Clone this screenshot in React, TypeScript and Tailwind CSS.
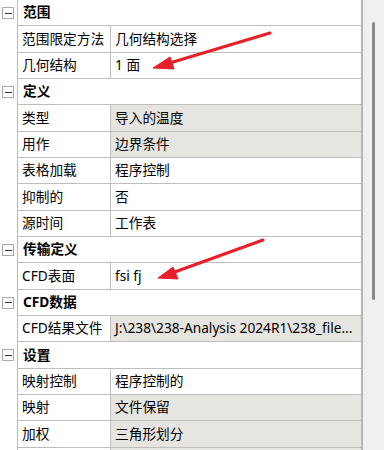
import React from 'react';

type Row =
  | { kind: 'group'; title: string }
  | { kind: 'prop'; name: string; value: string; readOnly?: boolean };

const rows: Row[] = [
  { kind: 'group', title: '范围' },
  { kind: 'prop', name: '范围限定方法', value: '几何结构选择' },
  { kind: 'prop', name: '几何结构', value: '1 面' },
  { kind: 'group', title: '定义' },
  { kind: 'prop', name: '类型', value: '导入的温度', readOnly: true },
  { kind: 'prop', name: '用作', value: '边界条件', readOnly: true },
  { kind: 'prop', name: '表格加载', value: '程序控制' },
  { kind: 'prop', name: '抑制的', value: '否' },
  { kind: 'prop', name: '源时间', value: '工作表' },
  { kind: 'group', title: '传输定义' },
  { kind: 'prop', name: 'CFD表面', value: 'fsi fj' },
  { kind: 'group', title: 'CFD数据' },
  { kind: 'prop', name: 'CFD结果文件', value: 'J:\\238\\238-Analysis 2024R1\\238_file...', readOnly: true },
  { kind: 'group', title: '设置' },
  { kind: 'prop', name: '映射控制', value: '程序控制的' },
  { kind: 'prop', name: '映射', value: '文件保留', readOnly: true },
  { kind: 'prop', name: '加权', value: '三角形划分', readOnly: true },
  { kind: 'prop', name: '', value: '', readOnly: true },
];

function MinusBox() {
  return (
    <div className="flex h-[12px] w-[12px] items-center justify-center border border-[#a6a6a6] bg-white">
      <div className="h-[1px] w-[7px] bg-[#333]" />
    </div>
  );
}

export default function App() {
  return (
    <div
      className="relative flex h-[450px] w-[384px] overflow-hidden bg-white text-[13.7px] text-black"
      style={{ fontFamily: '"Noto Sans", "Noto Sans CJK SC", sans-serif' }}
    >
      <div className="flex w-[363px] shrink-0 flex-col border-r-2 border-[#b5b5b5]">
        {rows.map((row, i) => (
          <div key={i} className="flex h-[26.33px] shrink-0">
            <div className="flex w-[18px] shrink-0 items-center justify-center border-r border-[#b9b9b9] pl-[1px] pr-[2px]">
              {row.kind === 'group' && <MinusBox />}
            </div>
            {row.kind === 'group' ? (
              <div className="flex flex-1 items-center border-b border-[#bdbdbd] pl-[5px] font-bold">
                {row.title}
              </div>
            ) : (
              <div className="flex flex-1 border-b border-[#bdbdbd]">
                <div className="flex w-[93px] shrink-0 items-center whitespace-nowrap border-r border-[#bdbdbd] pl-[4px]">
                  {row.name}
                </div>
                <div
                  className={
                    'flex flex-1 items-center overflow-hidden whitespace-nowrap pl-[4px] ' +
                    (row.readOnly ? 'bg-[#e7e5e1]' : 'bg-white')
                  }
                >
                  {row.value}
                </div>
              </div>
            )}
          </div>
        ))}
      </div>

      <div className="flex flex-1 justify-center bg-[#f0f0f0] pt-[22px]">
        <div className="h-[278px] w-[3px] rounded-full bg-[#8a8a8a]" />
      </div>

      <svg className="pointer-events-none absolute left-0 top-0" width="384" height="450">
        <g fill="#e81f2a" stroke="#e81f2a">
          <line x1="270" y1="33" x2="168" y2="63.5" strokeWidth="3" strokeLinecap="round" />
          <polygon points="153,68 170,57 174,69" strokeWidth="1" strokeLinejoin="round" />
          <line x1="263" y1="240" x2="172" y2="273" strokeWidth="3" strokeLinecap="round" />
          <polygon points="158,278 173,267 178,279" strokeWidth="1" strokeLinejoin="round" />
        </g>
      </svg>
    </div>
  );
}
